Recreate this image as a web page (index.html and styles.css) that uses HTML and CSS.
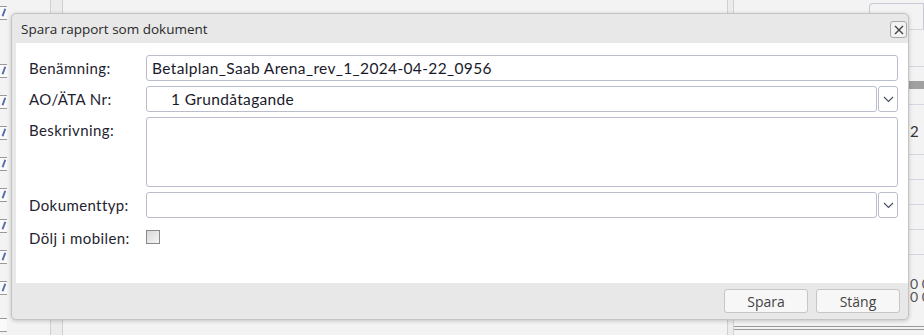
FILE: index.html
```html
<!DOCTYPE html>
<html lang="sv">
<head>
  <meta charset="UTF-8">
  <title>Spara rapport som dokument</title>
  <link rel="stylesheet" href="styles.css">
</head>
<body>
  <div class="sida">
    <div class="bockar">
      <span class="bock på"></span>
      <span class="bock på"></span>
      <span class="bock på"></span>
      <span class="bock på"></span>
      <span class="bock på"></span>
      <span class="bock på"></span>
      <span class="bock på"></span>
      <span class="bock på"></span>
      <span class="bock på"></span>
      <span class="bock"></span>
      <span class="bock på"></span>
    </div>
    <div class="skiljare"></div>
    <div class="huvud"></div>
    <div class="skiljare smal"></div>
    <div class="hoger">
      <div class="flik"></div>
      <div class="rad forsta"></div>
      <div class="rad"></div>
      <div class="rad mork"></div>
      <div class="rad hog"><span>2</span></div>
      <div class="rad"></div>
      <div class="rad"></div>
      <div class="rad"></div>
      <div class="rad"></div>
      <div class="rad sista"></div>
      <div class="rad lag"><span>0 0</span></div>
      <div class="rad lag"><span>0 0</span></div>
      <div class="rad dubbel"></div>
    </div>
  </div>

  <div class="dialog">
    <div class="dialog-titel">
      <span>Spara rapport som dokument</span>
      <button class="stang-x" title="Stäng">
        <svg width="10" height="10" viewBox="0 0 10 10"><path d="M1 1 L9 9 M9 1 L1 9" stroke="#444" stroke-width="1.4" fill="none"/></svg>
      </button>
    </div>
    <div class="dialog-innehall">
      <div class="falt">
        <label>Benämning:</label>
        <div class="ruta">Betalplan_Saab Arena_rev_1_2024-04-22_0956</div>
      </div>
      <div class="falt">
        <label>AO/ÄTA Nr:</label>
        <div class="val">
          <div class="ruta indrag">1 Grundåtagande</div>
          <div class="pil"><svg width="11" height="7" viewBox="0 0 11 7"><path d="M1 1 L5.5 5.5 L10 1" stroke="#4a5060" stroke-width="1.2" fill="none"/></svg></div>
        </div>
      </div>
      <div class="falt">
        <label>Beskrivning:</label>
        <div class="ruta text"></div>
      </div>
      <div class="falt">
        <label>Dokumenttyp:</label>
        <div class="val">
          <div class="ruta"></div>
          <div class="pil"><svg width="11" height="7" viewBox="0 0 11 7"><path d="M1 1 L5.5 5.5 L10 1" stroke="#4a5060" stroke-width="1.2" fill="none"/></svg></div>
        </div>
      </div>
      <div class="falt kort">
        <label>Dölj i mobilen:</label>
        <span class="kryss"></span>
      </div>
    </div>
    <div class="dialog-fot">
      <button class="knapp">Spara</button>
      <button class="knapp">Stäng</button>
    </div>
  </div>
</body>
</html>
```

FILE: styles.css
```css
html, body {
  height: 100%;
  margin: 0;
}
body {
  background-color: #f3f3f3;
  font-family: Lato, "Open Sans", sans-serif;
  color: #222;
  overflow: hidden;
}
.sida {
  display: flex;
  height: 335px;
}
.bockar {
  width: 7px;
  overflow: hidden;
  display: flex;
  flex-direction: column;
  padding-top: 6px;
  gap: 16px;
}
.bock {
  display: block;
  width: 12px;
  height: 12px;
  margin-left: -6px;
  border: 1px solid #9a9a9a;
  background-color: #fafafa;
  flex-shrink: 0;
  position: relative;
}
.bock.på::after {
  content: "";
  position: absolute;
  left: 5px;
  top: 1px;
  width: 3px;
  height: 8px;
  border-right: 2px solid #5a6fa8;
  transform: rotate(20deg);
}
.bockar .bock:nth-child(1) { margin-bottom: 28px; }
.bockar .bock:nth-child(n+2) { margin-bottom: 1px; }
.bockar .bock:nth-child(9) { margin-bottom: 7px; }
.skiljare {
  margin-left: 43px;
  width: 11px;
  border-left: 1px solid #d0d0d0;
  border-right: 1px solid #d0d0d0;
  background-color: #ececec;
}
.skiljare.smal {
  margin-left: 0;
  width: 5px;
}
.huvud {
  flex: 1;
}
.hoger {
  width: 190px;
  display: flex;
  flex-direction: column;
}
.flik {
  height: 25px;
  margin-left: 135px;
  margin-top: 3px;
  border: 1px solid #c9c9d6;
  border-bottom: none;
  border-radius: 4px 0 0 0;
}
.rad {
  height: 24px;
  flex-shrink: 0;
  border-top: 1px solid #d6d6e0;
  font-size: 15px;
  color: #333;
  padding-left: 176px;
  line-height: 24px;
  white-space: nowrap;
}
.rad.forsta { height: 36px; }
.rad.mork {
  height: 8px;
  background-color: #a0a0a0;
  border-top: none;
  margin-top: -10px;
  margin-bottom: 15px;
}
.rad.hog { height: 49px; line-height: 52px; }
.rad.sista { height: 22px; }
.rad.lag {
  height: 13px;
  line-height: 13px;
  border-top: none;
  color: #555;
  font-size: 14px;
}
.rad.dubbel {
  height: 2px;
  border-top: 1px solid #999;
  border-bottom: 1px solid #999;
  margin-top: 23px;
}

.dialog {
  position: absolute;
  left: 11px;
  top: 13px;
  width: 896px;
  height: 305px;
  background-color: #e8e8e8;
  border: 1px solid #c4c4c4;
  border-radius: 5px;
  box-shadow: 0 1px 4px rgba(0, 0, 0, 0.2);
  display: flex;
  flex-direction: column;
}
.dialog-titel {
  height: 29px;
  display: flex;
  align-items: center;
  justify-content: space-between;
  padding: 0 1px 0 9px;
  font-family: "Open Sans", sans-serif;
  font-size: 13.5px;
  font-weight: 500;
  color: #2a2a2a;
}
.stang-x {
  width: 17px;
  height: 17px;
  padding: 0;
  border: 1px solid #a8a8a8;
  border-radius: 3px;
  background-color: #f2f2f2;
  display: flex;
  align-items: center;
  justify-content: center;
  margin-top: 2px;
}
.dialog-innehall {
  height: 240px;
  box-sizing: border-box;
  margin-left: 4px;
  background-color: #ffffff;
  padding: 12px 10px 0 13px;
  display: flex;
  flex-direction: column;
  gap: 5px;
}
.falt {
  display: flex;
  align-items: flex-start;
}
.falt label {
  width: 117px;
  flex-shrink: 0;
  line-height: 26px;
  font-size: 15px;
  letter-spacing: 0.4px;
  color: #1f2330;
}
.ruta {
  flex: 1;
  height: 26px;
  box-sizing: border-box;
  border: 1px solid #babdcc;
  border-radius: 3px;
  padding: 0 5px;
  line-height: 24px;
  font-size: 15.5px;
  letter-spacing: 0.35px;
  color: #1a1a2a;
  background-color: #fff;
}
.ruta.indrag { padding-left: 24px; }
.ruta.text { height: 70px; }
.val {
  flex: 1;
  display: flex;
}
.pil {
  width: 20px;
  height: 26px;
  box-sizing: border-box;
  margin-left: 1px;
  border: 1px solid #babdcc;
  border-radius: 3px;
  display: flex;
  align-items: center;
  justify-content: center;
}
.falt.kort {
  margin-top: 6px;
  align-items: center;
}
.falt.kort label { line-height: 18px; }
.kryss {
  width: 14px;
  height: 14px;
  box-sizing: border-box;
  border: 1px solid #8a8a8a;
  background: linear-gradient(135deg, #d8d8d8, #f6f6f6);
  margin-top: -3px;
}
.dialog-fot {
  flex: 1;
  display: flex;
  justify-content: flex-end;
  align-items: flex-start;
  gap: 8px;
  padding: 6px 8px 0 0;
}
.knapp {
  width: 84px;
  height: 24px;
  border: 1px solid #c6c6c6;
  border-radius: 3px;
  background-color: #f7f7f7;
  font-family: "Open Sans", sans-serif;
  font-size: 14px;
  color: #444;
  padding: 0;
}
```
